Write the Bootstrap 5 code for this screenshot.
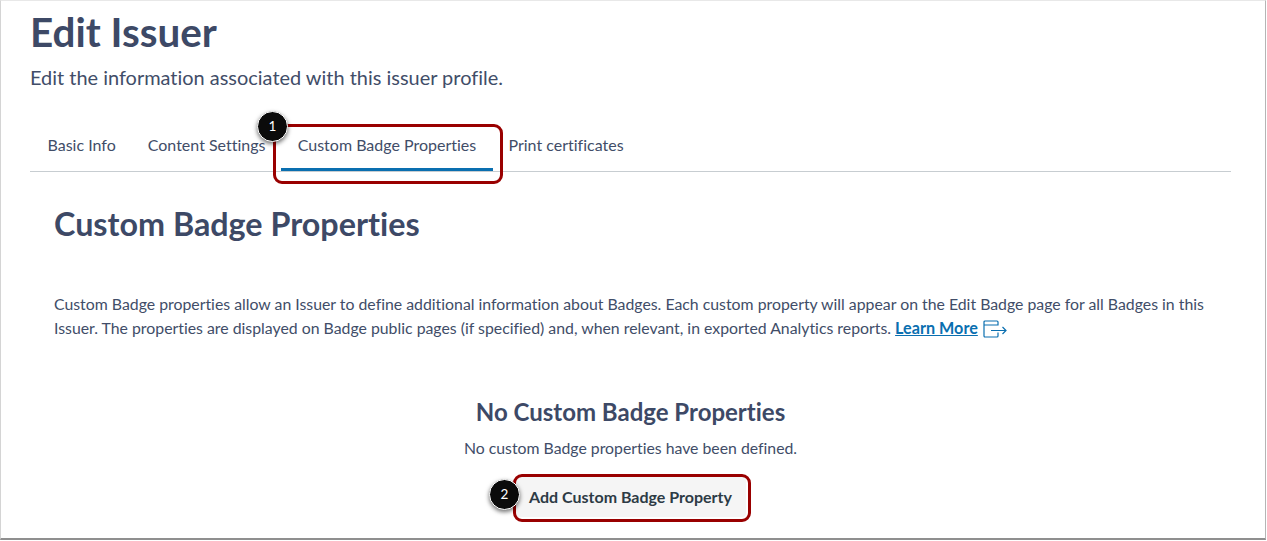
<!DOCTYPE html>
<html lang="en">
<head>
    <meta charset="UTF-8">
    <title>Edit Issuer</title>
    <link rel="stylesheet" href="https://cdn.jsdelivr.net/npm/bootstrap@5.3.0/dist/css/bootstrap.min.css">
    <style>
        html, body { height: 541px; overflow: hidden; background: #fff; }
        body { font-family: Lato, "Liberation Sans", sans-serif; color: #414d68; font-variant-ligatures: none; }
        .shot-frame { position: relative; width: 1266px; height: 540px; border-right: 1px solid #b5b5b5; border-bottom: 2px solid #8f8f8f; border-left: 1px solid #d4d4d4; border-top: 1px solid #e8e8e8; padding: 0 34px 0 29px; overflow: hidden; }
        .page-title { font-size: 40.4px; font-weight: 700; line-height: 46px; margin: 8px 0 0; color: #3d4966; }
        .page-sub { font-size: 19.95px; line-height: 26px; margin: 9px 0 0; }
        .tab-row { margin-top: 31px; height: 51px; border-bottom: 1px solid #c7cdd1; }
        .tab-row .nav-link { color: #414d68; font-size: 16px; line-height: 24px; padding: 12px 16.5px 0; height: 50px; }
        .tab-row .tab-first { padding-left: 17.5px; padding-right: 15.5px; }
        .tab-row .tab-second { padding-right: 15.5px; }
        .tab-row .tab-last { padding-left: 15.5px; }
        .tab-row .nav-link.active { border-bottom: 3px solid #0a6fb0; width: 212px; padding: 12px 0 0; text-align: center; }
        .pane { padding: 0 24px; }
        .pane-title { font-size: 32.3px; font-weight: 700; line-height: 38px; margin: 33px 0 0; color: #3d4966; }
        .pane-text { font-size: 15.84px; line-height: 24px; margin: 49px 0 0; color: #414d68; }
        .pane-text a { color: #0a6fb0; font-weight: 700; font-size: 16.2px; }
        .pane-text svg { vertical-align: -4px; margin-left: 1px; }
        .empty-title { font-size: 24px; font-weight: 700; line-height: 30px; margin: 57px 0 0; color: #3d4966; }
        .empty-text { font-size: 15.8px; line-height: 24px; margin: 9px 0 0; }
        .add-btn { margin-top: 17px; background: #f5f5f5; border: 0; color: #2d3b45; font-weight: 700; font-size: 16px; line-height: 24px; padding: 8px 14px; border-radius: 4px; }
        .add-btn:hover { background: #f5f5f5; color: #2d3b45; }
        .callout { position: absolute; border: 3px solid #990000; border-radius: 9px; }
        .callout-tab { left: 272px; top: 123px; width: 230px; height: 60px; }
        .callout-btn { left: 512px; top: 473px; width: 238px; height: 48px; }
        .step-dot { position: absolute; width: 31px; height: 31px; border-radius: 50%; background: #0b0b0b; border: 1px solid #fff; color: #fff; font-size: 13.5px; line-height: 29px; text-align: center; box-shadow: 0 2px 4px rgba(0,0,0,.55); }
        .dot-one { left: 256px; top: 110px; }
        .dot-two { left: 488px; top: 478px; }
    </style>
</head>
<body>
    <div class="shot-frame">
        <h1 class="page-title">Edit Issuer</h1>
        <p class="page-sub">Edit the information associated with this issuer profile.</p>
        <ul class="nav tab-row">
            <li class="nav-item"><a class="nav-link tab-first" href="#">Basic Info</a></li>
            <li class="nav-item"><a class="nav-link tab-second" href="#">Content Settings</a></li>
            <li class="nav-item"><a class="nav-link active" href="#">Custom Badge Properties</a></li>
            <li class="nav-item"><a class="nav-link tab-last" href="#">Print certificates</a></li>
        </ul>
        <div class="pane">
            <h2 class="pane-title">Custom Badge Properties</h2>
            <p class="pane-text">Custom Badge properties allow an Issuer to define additional information about Badges. Each custom property will appear on the Edit Badge page for all Badges in this Issuer. The properties are displayed on Badge public pages (if specified) and, when relevant, in exported Analytics reports. <a href="#">Learn More</a>
                <svg width="24" height="18" viewBox="0 0 24 18" fill="none" stroke="#0a6fb0" stroke-width="1.2"><path d="M15 12.5V16a1 1 0 0 1-1 1H2a1 1 0 0 1-1-1V2a1 1 0 0 1 1-1h12a1 1 0 0 1 1 1v3.5M1 5h14M8 10.5h15M19.5 7l3.5 3.5-3.5 3.5"/></svg>
            </p>
            <div class="text-center">
                <h3 class="empty-title">No Custom Badge Properties</h3>
                <p class="empty-text">No custom Badge properties have been defined.</p>
                <button type="button" class="btn add-btn">Add Custom Badge Property</button>
            </div>
        </div>
        <div class="callout callout-tab"></div>
        <div class="callout callout-btn"></div>
        <div class="step-dot dot-one">1</div>
        <div class="step-dot dot-two">2</div>
    </div>
</body>
</html>
